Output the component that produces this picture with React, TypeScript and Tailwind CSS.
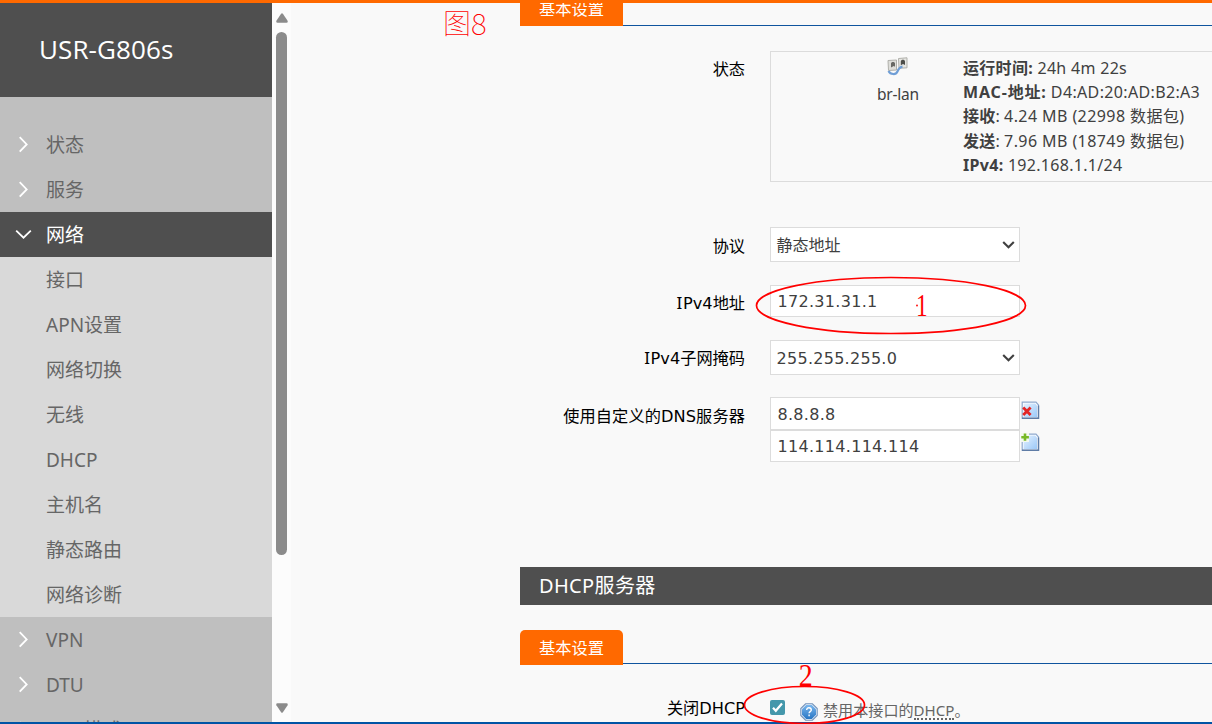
import type { ReactNode } from "react";

const subItems = ["接口", "APN设置", "网络切换", "无线", "DHCP", "主机名", "静态路由", "网络诊断"];

function Arrow({ open = false }: { open?: boolean }) {
  return (
    <svg className="-mt-px" width="18" height="18" viewBox="0 0 18 18" fill="none" stroke="#fff" strokeWidth="1.8">
      {open ? <path d="M2.2 5.7 9.5 12.7 16.8 5.7" /> : <path d="M5.7 2.2 12.7 9.4 5.7 16.6" />}
    </svg>
  );
}

function MenuItem({ text, open = false }: { text: string; open?: boolean }) {
  return (
    <div
      className={
        open
          ? "flex h-[45px] shrink-0 items-center gap-[14px] bg-[#4f4f4f] pl-[14px] text-white"
          : "flex h-[45px] shrink-0 items-center gap-[14px] pl-[14px]"
      }
    >
      <Arrow open={open} />
      <span className="pt-[2px]">{text}</span>
    </div>
  );
}

function TabRow({ className, lineClass, label }: { className: string; lineClass: string; label: string }) {
  return (
    <div className={`flex h-[35px] shrink-0 ${className}`}>
      <div className="flex w-[103px] items-center justify-center rounded-t-[5px] bg-[#ff6900] pt-[2px] text-[16.3px] text-white">
        {label}
      </div>
      <div className={`flex-1 border-b border-[#0f559f] ${lineClass}`} />
    </div>
  );
}

function Row({ label, className, labelClass, children }: { label: ReactNode; className: string; labelClass: string; children: ReactNode }) {
  return (
    <div className={`flex shrink-0 gap-[25px] ${className}`}>
      <div className={`w-[225px] shrink-0 whitespace-nowrap text-right font-['DejaVu_Sans','Noto_Sans_CJK_SC',sans-serif] text-[16.2px] leading-[24px] text-black ${labelClass}`}>
        {label}
      </div>
      {children}
    </div>
  );
}

function SelectBox({ text, textClass }: { text: string; textClass: string }) {
  return (
    <div className="flex h-[35px] w-[250px] items-center justify-between border border-[#dcdcdc] bg-white pl-[5.5px] pr-[4px]">
      <span className={textClass}>{text}</span>
      <svg width="13" height="10" viewBox="0 0 13 10" fill="none" stroke="#404040" strokeWidth="2.1">
        <path d="M1.2 2 6.5 7.3 11.8 2" />
      </svg>
    </div>
  );
}

function InputBox({ text, className }: { text: string; className: string }) {
  return (
    <div className={`flex w-[250px] items-center border border-[#dcdcdc] bg-white pl-[6.5px] pt-[2px] font-['DejaVu_Sans',sans-serif] tracking-[0.3px] ${className}`}>
      {text}
    </div>
  );
}

function PageIcon({ kind }: { kind: "remove" | "add" }) {
  return (
    <svg width="19" height="19" viewBox="0 0 19 19" fill="none">
      <defs>
        <linearGradient id={`page-${kind}`} x1="0" y1="0" x2="1" y2="1">
          <stop offset="0" stopColor="#e4f1ff" />
          <stop offset="1" stopColor="#9cc9f8" />
        </linearGradient>
      </defs>
      <path d="M1.2 1.2H15l2.5 2.8v13.3H1.2Z" fill="#fff" stroke="#8fa9ce" strokeWidth="1.2" />
      <path d="M2.6 2.6h11.6l1.8 2v11.4H2.6Z" fill={`url(#page-${kind})`} />
      <path d="M1 17.3h16.5V4.5" stroke="#5f7ca6" strokeWidth="1.4" />
      {kind === "remove" ? (
        <path d="m2.2 6.6 7.4 7.4m0-7.4-7.4 7.4" stroke="#e32626" strokeWidth="2.8" />
      ) : (
        <>
          <path d="M0 0h8v9H0Z" fill="#f4f9ee" />
          <path d="M4 .5v7.3M.3 4.2h7.6" stroke="#78b928" strokeWidth="2.6" />
        </>
      )}
    </svg>
  );
}

function BridgeIcon() {
  return (
    <svg width="22" height="19" viewBox="0 0 22 19" fill="none">
      <path d="M1 3.5 9.5 3v10L1.5 13.5Z" fill="#dededa" stroke="#b0b0ab" />
      <path d="m11.5 1.5 8.5-.7v10l-8 .5Z" fill="#e6e6e2" stroke="#b0b0ab" />
      <path d="M4 6.5c0-2 4-2 4 0v3.2L6.8 9 4 10.5Z" fill="#686864" />
      <path d="M13.8 4.5c0-2.2 4.2-2.2 4.2 0V8l-2-1-2.2 1.2Z" fill="#4d4d49" />
      <path d="M1.5 14c2 4 7.5 3.8 8.8.8 1.2-3 2-4.7 5.2-5.2" stroke="#6f9ed6" strokeWidth="2.2" />
    </svg>
  );
}

function HelpIcon() {
  return (
    <svg width="18" height="18" viewBox="0 0 18 18" fill="none">
      <defs>
        <linearGradient id="help" x1="0" y1="0" x2="0" y2="1">
          <stop offset="0" stopColor="#79b6ed" />
          <stop offset="1" stopColor="#2876c4" />
        </linearGradient>
      </defs>
      <path d="M5.6.8h6.8l4.8 4.8v6.8l-4.8 4.8H5.6L.8 12.4V5.6Z" fill="#e6eef8" stroke="#7393bb" strokeWidth="1.1" />
      <path d="M6.2 2h5.6L16 6.2v5.6L11.8 16H6.2L2 11.8V6.2Z" fill="url(#help)" />
      <path d="M6.7 7c0-3 4.6-2.9 4.6 0 0 1.5-2.2 1.7-2.2 3.2m0 1.4v1.6" stroke="#fff" strokeWidth="1.4" />
    </svg>
  );
}

function Ipv4Label({ rest }: { rest: string }) {
  return (
    <>
      <span className="font-['Noto_Sans',sans-serif] text-[17px] tracking-[0.6px]">I</span>Pv4{rest}
    </>
  );
}

export default function App() {
  return (
    <div className="relative flex h-[724px] w-[1212px] flex-col overflow-hidden bg-[#f9f9f9] font-['Noto_Sans','Noto_Sans_CJK_SC',sans-serif] text-[16px] text-[#404040]">
      <div className="h-[3px] shrink-0 bg-[#ff6900]" />
      <div className="flex h-[719px] shrink-0 overflow-hidden">
        <aside className="flex w-[272px] shrink-0 flex-col overflow-hidden bg-[#bfbfbf] text-[19px] text-[#666]">
          <div className="flex h-[94px] shrink-0 items-center bg-[#4f4f4f] pb-[2px] pl-[39px] font-['Open_Sans',sans-serif] text-[26px] tracking-[0.1px] text-white">
            USR-G806s
          </div>
          <nav className="flex flex-col pt-[25px]">
            <MenuItem text="状态" />
            <MenuItem text="服务" />
            <MenuItem text="网络" open />
            <div className="flex flex-col bg-[#d9d9d9]">
              {subItems.map((item) => (
                <div key={item} className="flex h-[45px] items-center pl-[46px] pt-[2px]">
                  {item}
                </div>
              ))}
            </div>
            <MenuItem text="VPN" />
            <MenuItem text="DTU" />
            <MenuItem text="DTU模式" />
          </nav>
        </aside>

        <div className="flex w-[19px] shrink-0 flex-col items-center bg-[#fcfcfc] pt-[10px]">
          <svg width="12" height="10" viewBox="0 0 12 10" fill="#8b8b8b">
            <path d="M5.1.8Q6-.5 6.9.8L11.6 7.8Q12.2 9.8 10.5 9.8H1.5Q-.2 9.8.4 7.8Z" />
          </svg>
          <div className="mt-[9px] h-[523px] w-[11px] rounded-full bg-[#8b8b8b]" />
          <svg className="mt-[148px]" width="12" height="10" viewBox="0 0 12 10" fill="#8b8b8b">
            <path d="M5.1 9.2Q6 10.5 6.9 9.2L11.6 2.2Q12.2.2 10.5.2H1.5Q-.2.2.4 2.2Z" />
          </svg>
        </div>

        <main className="flex flex-1 flex-col overflow-hidden pl-[229px]">
          <TabRow className="-mt-[12px]" lineClass="" label="基本设置" />
          <Row className="mt-[25px] h-[131px]" labelClass="pt-[7px]" label="状态">
            <div className="flex flex-1 border border-r-0 border-[#dcdcdc]">
              <div className="flex w-[192px] shrink-0 flex-col items-center pl-[62px] pt-[5px]">
                <BridgeIcon />
                <span className="mt-[6px] whitespace-nowrap text-[15.5px] leading-[24px] tracking-[-0.2px]">br-lan</span>
              </div>
              <div className="whitespace-nowrap pt-[4px] leading-[24.2px]">
                <div className="tracking-[0.3px]"><b>运行时间:</b> 24h 4m 22s</div>
                <div><b className="tracking-[0.85px]">MAC-地址:</b> <span className="tracking-[0.35px]">D4:AD:20:AD:B2:A3</span></div>
                <div><b className="tracking-[0.3px]">接收</b>: <span className="tracking-[0.42px]">4.24 MB (22998 数据包)</span></div>
                <div><b className="tracking-[0.3px]">发送</b>: <span className="tracking-[0.42px]">7.96 MB (18749 数据包)</span></div>
                <div className="tracking-[0.3px]"><b>IPv4:</b> 192.168.1.1/24</div>
              </div>
            </div>
          </Row>
          <Row className="mt-[45px] h-[35px]" labelClass="pt-[8px]" label="协议">
            <SelectBox text="静态地址" textClass="" />
          </Row>
          <Row className="mt-[23px] h-[32px]" labelClass="pt-[6px]" label={<Ipv4Label rest="地址" />}>
            <InputBox text="172.31.31.1" className="h-[32px]" />
          </Row>
          <Row className="mt-[23px] h-[35px]" labelClass="pt-[6px]" label={<Ipv4Label rest="子网掩码" />}>
            <SelectBox text="255.255.255.0" textClass="pt-[2px] font-['DejaVu_Sans',sans-serif] tracking-[0.28px]" />
          </Row>
          <Row className="mt-[22px] h-[65px]" labelClass="pt-[8px] tracking-[0.1px]" label="使用自定义的DNS服务器">
            <div className="flex">
              <div className="flex flex-col">
                <InputBox text="8.8.8.8" className="h-[33px]" />
                <InputBox text="114.114.114.114" className="h-[32px]" />
              </div>
              <div className="flex flex-col gap-[13px] pl-[0.5px] pt-[4px]">
                <PageIcon kind="remove" />
                <PageIcon kind="add" />
              </div>
            </div>
          </Row>
          <div className="mt-[105px] flex h-[38px] shrink-0 items-center bg-[#4f4f4f] pl-[19px] text-[20px] tracking-[0.35px] text-white">
            DHCP服务器
          </div>
          <TabRow className="mt-[25px]" lineClass="mb-px" label="基本设置" />
          <Row className="mt-[25px] h-[40px]" labelClass="pt-[7px]" label="关闭DHCP">
            <div className="flex pt-[9px]">
              <svg className="mt-px" width="15" height="15" viewBox="0 0 15 15" fill="none">
                <rect width="15" height="15" rx="2" fill="#4497ab" />
                <path d="m3 7.8 2.8 3L12 3.5" stroke="#fff" strokeWidth="2.2" />
              </svg>
              <div className="ml-[14.5px] mt-[3.5px]"><HelpIcon /></div>
              <div className="ml-[5.5px] whitespace-nowrap text-[15.1px] leading-[22px] text-[#666]">
                禁用本接口的<span className="inline-block h-[21px] border-b-2 border-dotted border-[#666]">DHCP</span>。
              </div>
            </div>
          </Row>
        </main>
      </div>
      <div className="h-[2px] shrink-0 bg-[#0054a5]" />

      <svg className="absolute left-0 top-0" width="1212" height="724" viewBox="0 0 1212 724" fill="none" stroke="#f00" strokeWidth="1.7">
        <ellipse cx="891" cy="305.5" rx="134.5" ry="28" />
        <ellipse cx="804.5" cy="705" rx="60" ry="18.5" />
        <circle cx="917" cy="305.5" r="0.9" fill="#f00" stroke="none" />
      </svg>
      <div className="absolute left-[443px] top-[2px] flex whitespace-nowrap font-['Noto_Sans_CJK_SC',sans-serif] text-[28px] font-thin leading-[40px] text-[#f00]">
        <span>图</span>
        <span className="text-[30px]">8</span>
      </div>
      <div className="absolute left-[914px] top-[289px] scale-x-75 font-['Liberation_Serif',serif] text-[31px] leading-[34px] text-[#f00]">1</div>
      <div className="absolute left-[798px] top-[659px] scale-x-90 font-['Liberation_Serif',serif] text-[31px] leading-[34px] text-[#f00]">2</div>
    </div>
  );
}
